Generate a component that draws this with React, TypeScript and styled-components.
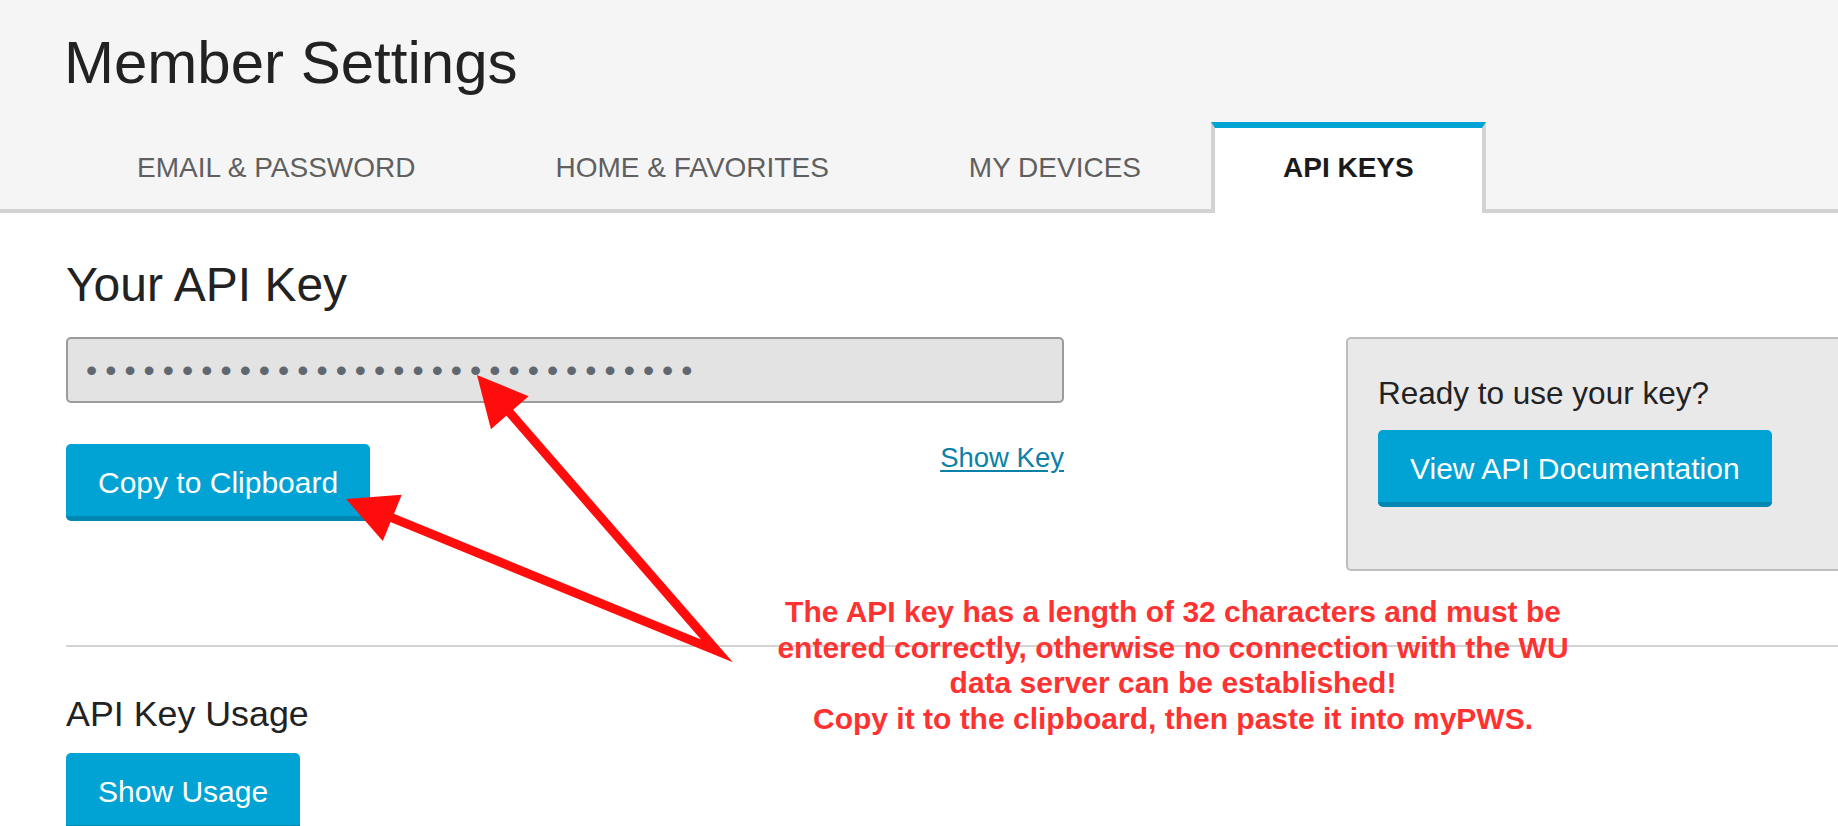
import React from "react";
import styled, { createGlobalStyle, css } from "styled-components";

const GlobalStyle = createGlobalStyle`
  html, body {
    margin: 0;
    padding: 0;
    overflow: hidden;
    background: #ffffff;
  }
  * {
    box-sizing: border-box;
  }
`;

const tabs = ["EMAIL & PASSWORD", "HOME & FAVORITES", "MY DEVICES", "API KEYS"];
const activeTab = "API KEYS";

// annotation arrows: both start from the same vertex under the note
const vertex = { x: 717, y: 651 };
const arrowTips = [
  { x: 477, y: 375 },
  { x: 346, y: 499 },
];

function arrowHead(tip: { x: number; y: number }) {
  const dx = vertex.x - tip.x;
  const dy = vertex.y - tip.y;
  const len = Math.sqrt(dx * dx + dy * dy);
  const ux = dx / len;
  const uy = dy / len;
  const headLen = 50;
  const half = 25;
  const bx = tip.x + ux * headLen;
  const by = tip.y + uy * headLen;
  const points = [
    `${tip.x},${tip.y}`,
    `${bx - uy * half},${by + ux * half}`,
    `${bx + uy * half},${by - ux * half}`,
  ].join(" ");
  return { points, base: { x: tip.x + ux * (headLen - 6), y: tip.y + uy * (headLen - 6) } };
}

function App() {
  const heads = arrowTips.map(arrowHead);

  return (
    <Page>
      <GlobalStyle />
      <Header>
        <Title>Member Settings</Title>
        <Tabs>
          {tabs.map((tab) => (
            <Tab key={tab} active={tab === activeTab}>
              {tab}
            </Tab>
          ))}
        </Tabs>
      </Header>

      <Content>
        <SectionTitle>Your API Key</SectionTitle>
        <KeyRow>
          <KeyColumn>
            <KeyInput type="password" readOnly value="abcdefghijklmnopqrstuvwxyz012345" />
            <Actions>
              <Button>Copy to Clipboard</Button>
              <ShowKey href="#">Show Key</ShowKey>
            </Actions>
          </KeyColumn>
          <InfoBox>
            <InfoText>Ready to use your key?</InfoText>
            <Button>View API Documentation</Button>
          </InfoBox>
        </KeyRow>
        <Divider />
        <UsageTitle>API Key Usage</UsageTitle>
        <Button>Show Usage</Button>
      </Content>

      <Arrows width="1838" height="826" viewBox="0 0 1838 826">
        <polyline
          points={`${heads[0].base.x},${heads[0].base.y} ${vertex.x},${vertex.y} ${heads[1].base.x},${heads[1].base.y}`}
          fill="none"
          stroke="#ff0d0d"
          strokeWidth={9}
          strokeLinejoin="miter"
          strokeMiterlimit={10}
        />
        {heads.map((head, index) => (
          <polygon key={index} points={head.points} fill="#ff0d0d" />
        ))}
      </Arrows>

      <Note>
        <NoteLine>The API key has a length of 32 characters and must be</NoteLine>
        <NoteLine>entered correctly, otherwise no connection with the WU</NoteLine>
        <NoteLine>data server can be established!</NoteLine>
        <NoteLine>Copy it to the clipboard, then paste it into myPWS.</NoteLine>
      </Note>
    </Page>
  );
}

export default App;

const Page = styled.div`
  position: relative;
  width: 100%;
  height: 826px;
  overflow: hidden;
  font-family: "Liberation Sans", Arial, Helvetica, sans-serif;
  color: #222222;
`;

const Header = styled.header`
  background: #f5f5f5;
  border-bottom: 4px solid #d3d3d3;
  padding: 27px 0 0 64px;
`;

const Title = styled.h1`
  margin: 0;
  font-size: 60px;
  font-weight: 400;
  line-height: 72px;
  color: #222222;
`;

const Tabs = styled.nav`
  display: flex;
  margin: 23px 0 0 3px;
`;

const Tab = styled.div(
  (props: { active: boolean }) => css`
    height: 91px;
    margin-bottom: -4px;
    padding: 0 66px 6px;
    display: flex;
    align-items: center;
    font-size: 28px;
    line-height: 30px;
    font-weight: 400;
    color: #5f5f5f;
    border-top: 6px solid transparent;
    border-left: 4px solid transparent;
    border-right: 4px solid transparent;
    white-space: nowrap;

    ${props.active &&
    css`
      padding: 0 68px 6px;
      background: #ffffff;
      border-top-color: #00a3d4;
      border-left-color: #d3d3d3;
      border-right-color: #d3d3d3;
      color: #1b1b1b;
      font-weight: 700;
    `}
  `
);

const Content = styled.main`
  padding-left: 66px;
`;

const SectionTitle = styled.h2`
  margin: 44px 0 0;
  font-size: 48px;
  font-weight: 400;
  line-height: 56px;
  color: #222222;
`;

const KeyRow = styled.div`
  display: grid;
  grid-template-columns: 998px 560px;
  column-gap: 282px;
  align-items: start;
  margin-top: 24px;
`;

const KeyColumn = styled.div`
  display: flex;
  flex-direction: column;
`;

const KeyInput = styled.input`
  width: 100%;
  height: 66px;
  padding: 0 0 0 18px;
  background: #e3e3e3;
  border: 2px solid #9b9b9b;
  border-radius: 5px;
  font-family: "Liberation Sans", Arial, sans-serif;
  font-size: 32px;
  letter-spacing: 8px;
  color: #5f6770;
  outline: none;
`;

const Actions = styled.div`
  display: flex;
  justify-content: space-between;
  align-items: flex-start;
  margin-top: 41px;
`;

const Button = styled.button`
  display: flex;
  align-items: center;
  height: 77px;
  padding: 5px 32px 0;
  background: #00a3d4;
  border: none;
  border-bottom: 5px solid #0087b1;
  border-radius: 5px;
  color: #ffffff;
  font-family: "Liberation Sans", Arial, sans-serif;
  font-size: 30px;
  font-weight: 400;
  white-space: nowrap;
  cursor: pointer;
`;

const ShowKey = styled.a`
  margin-top: -2px;
  font-size: 27.5px;
  line-height: 32px;
  color: #0b80a8;
  text-decoration: underline;
  text-underline-offset: 3px;
`;

const InfoBox = styled.div`
  display: flex;
  flex-direction: column;
  align-items: flex-start;
  row-gap: 19px;
  padding: 36px 30px 62px;
  background: #e9e9e9;
  border: 2px solid #bdbdbd;
  border-radius: 5px;
`;

const InfoText = styled.p`
  margin: 0;
  font-size: 31.5px;
  line-height: 36px;
  color: #222222;
`;

const Divider = styled.hr`
  margin: 74px 0 0;
  height: 2px;
  border: none;
  background: #d3d3d3;
`;

const UsageTitle = styled.h3`
  margin: 47px 0 19px;
  font-size: 35.8px;
  font-weight: 400;
  line-height: 40px;
  color: #222222;
`;

const Arrows = styled.svg`
  position: absolute;
  top: 0;
  left: 0;
  pointer-events: none;
`;

const Note = styled.div`
  position: absolute;
  top: 594px;
  left: 673px;
  width: 1000px;
  text-align: center;
  font-size: 30px;
  font-weight: 700;
  line-height: 35.5px;
  color: #ff3232;
`;

const NoteLine = styled.span`
  display: block;
`;
